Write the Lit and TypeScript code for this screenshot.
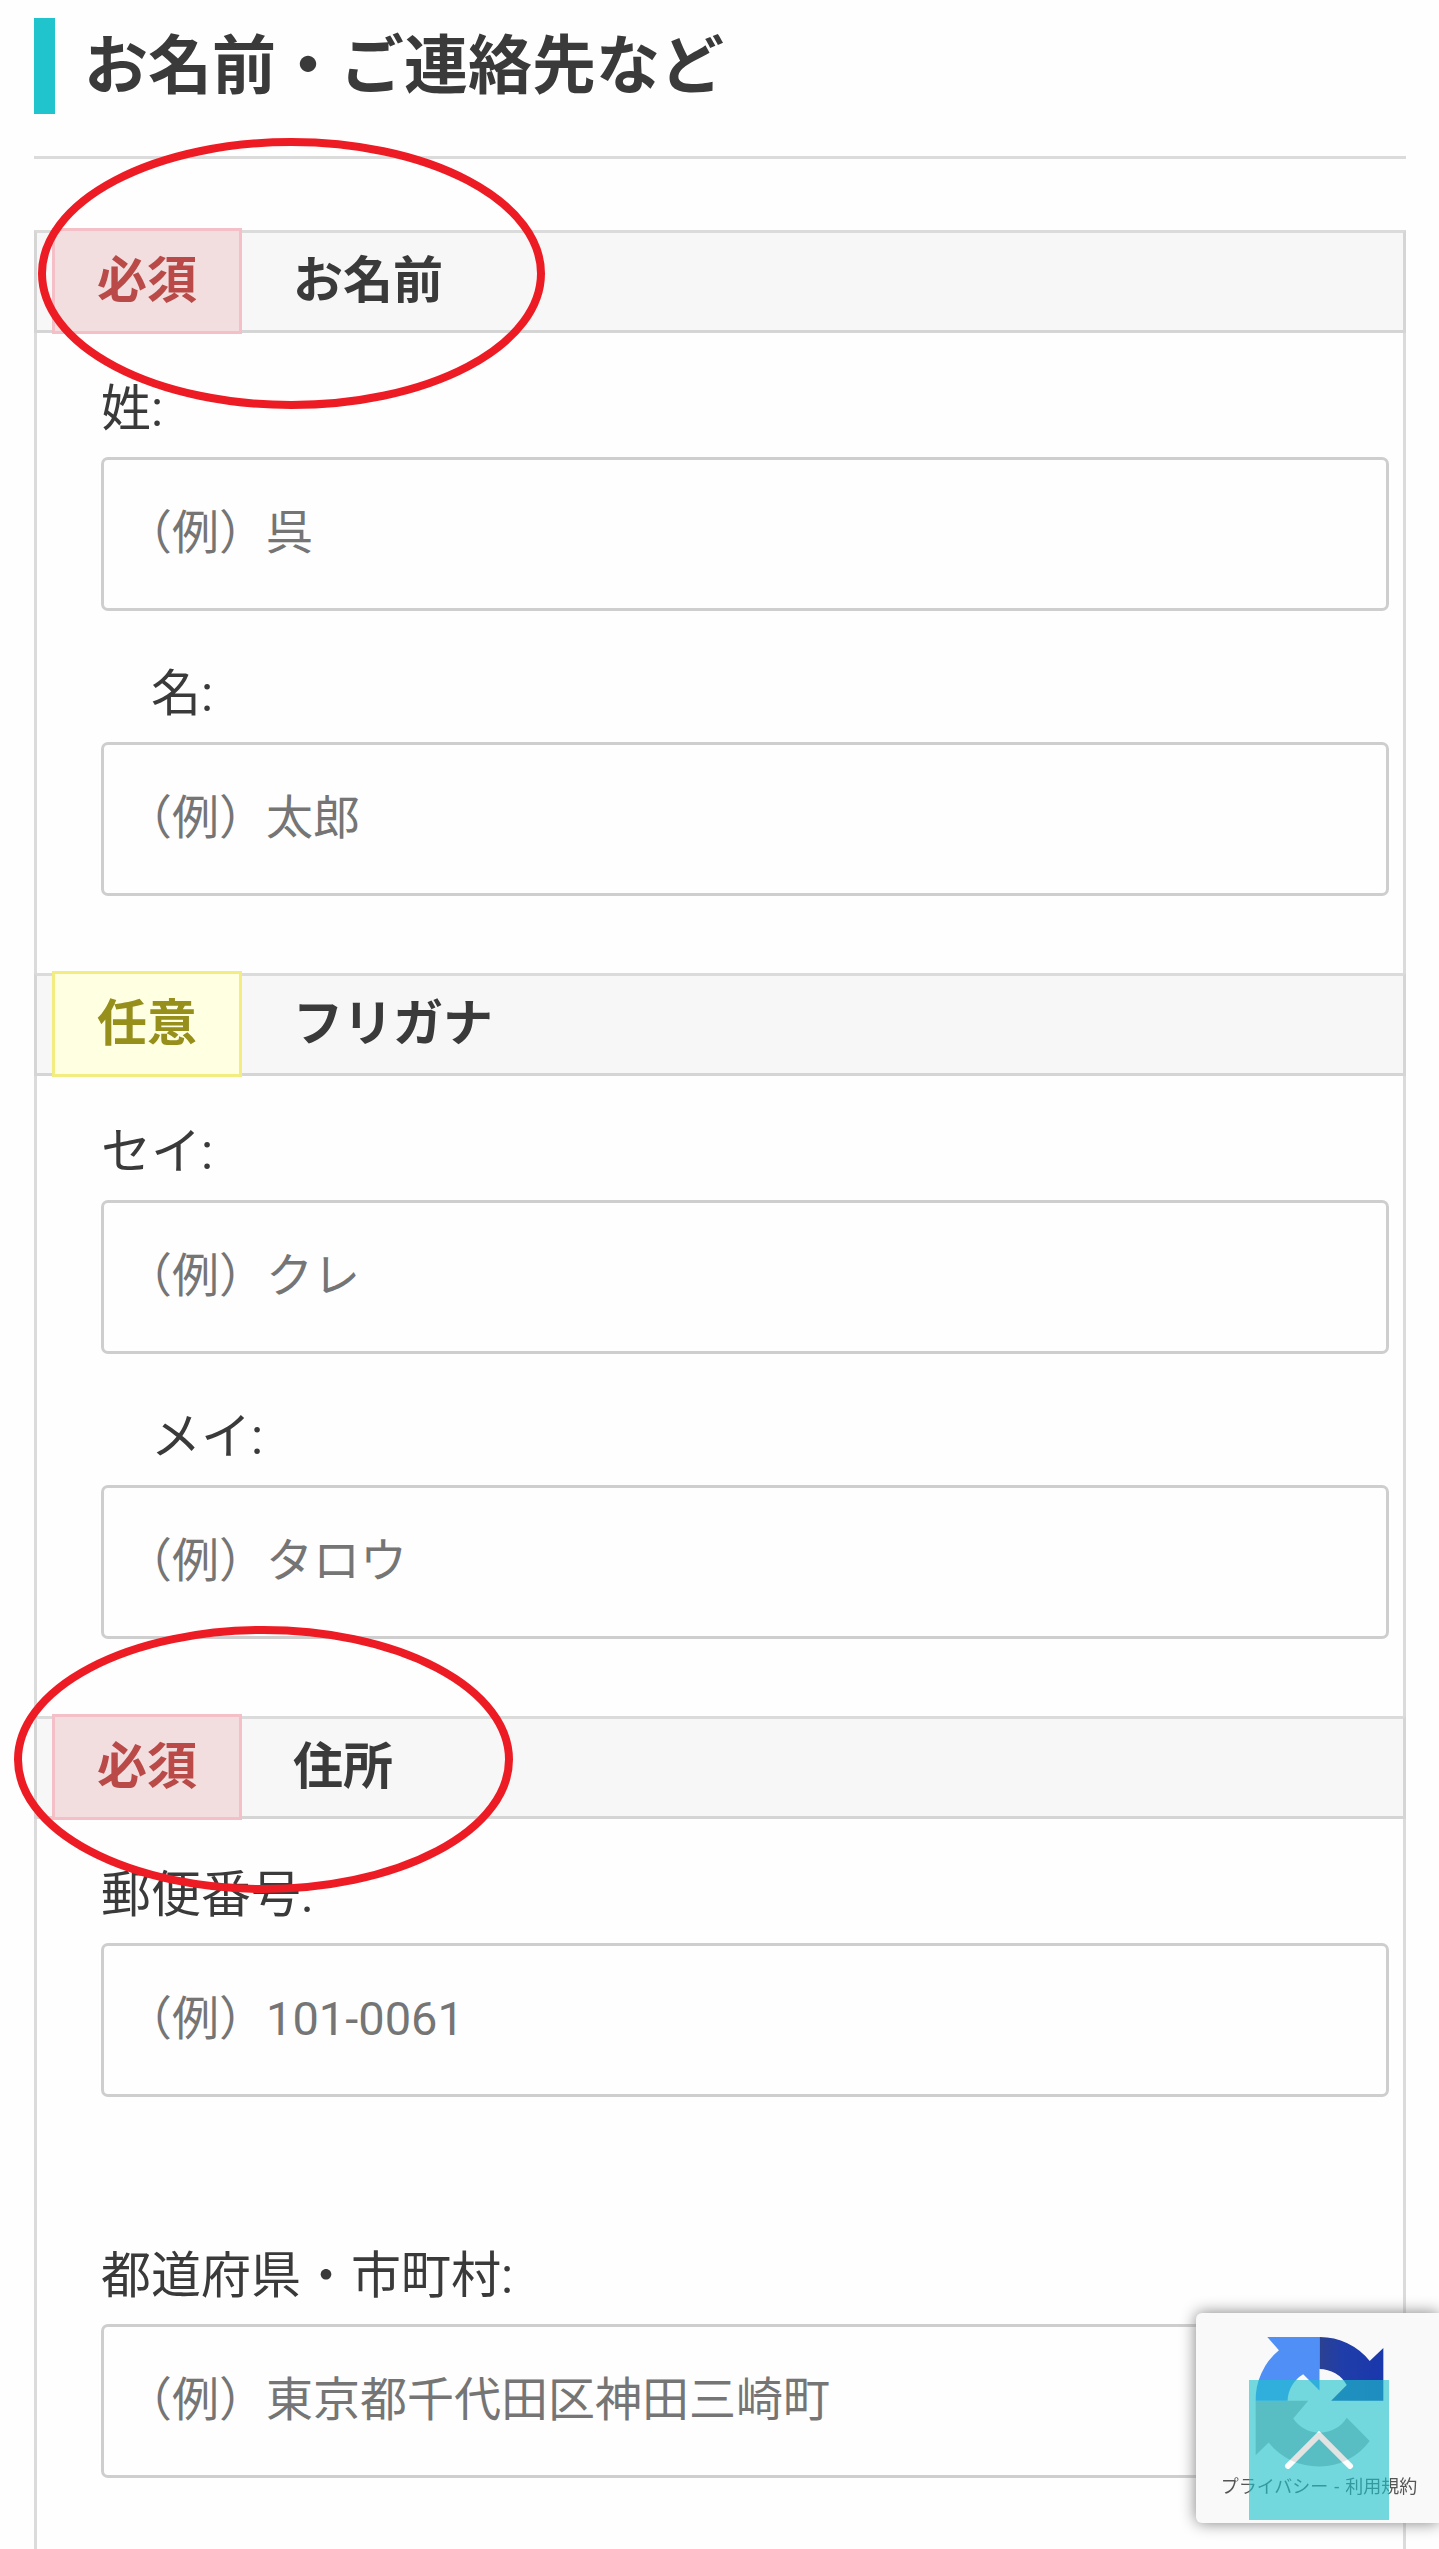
import { LitElement, html, css, nothing } from "lit";
import { customElement, property } from "lit/decorators.js";

interface Field {
  id: string;
  label: string;
  placeholder: string;
  layout?: "indented" | "spaced";
}

interface Group {
  title: string;
  required: boolean;
  mark?: "name" | "address";
  fields: Field[];
}

const GROUPS: Group[] = [
  {
    title: "お名前",
    required: true,
    mark: "name",
    fields: [
      { id: "family-name", label: "姓:", placeholder: "（例）呉" },
      { id: "given-name", label: "名:", placeholder: "（例）太郎", layout: "indented" },
    ],
  },
  {
    title: "フリガナ",
    required: false,
    fields: [
      { id: "family-kana", label: "セイ:", placeholder: "（例）クレ" },
      { id: "given-kana", label: "メイ:", placeholder: "（例）タロウ", layout: "indented" },
    ],
  },
  {
    title: "住所",
    required: true,
    mark: "address",
    fields: [
      { id: "postal-code", label: "郵便番号:", placeholder: "（例）101-0061" },
      {
        id: "city",
        label: "都道府県・市町村:",
        placeholder: "（例）東京都千代田区神田三崎町",
        layout: "spaced",
      },
    ],
  },
];

@customElement("form-group")
class FormGroup extends LitElement {
  @property({ attribute: false }) group!: Group;

  static styles = css`
    :host {
      display: block;
      position: relative;
    }
    .band {
      display: flex;
      align-items: stretch;
      gap: 51px;
      box-sizing: border-box;
      height: 103px;
      padding-left: 15px;
      border: 3px solid #d5d5d5;
      border-top-color: #dbdbdb;
      background: #f7f7f7;
    }
    .badge,
    .title {
      margin: 0;
      font-size: 50px;
      font-weight: 700;
      line-height: 96px;
    }
    .badge {
      margin: -5px 0 -4px;
      padding: 2px 42px 0;
      border: 3px solid #f5bfc8;
      background: #f2dede;
      color: #b94a48;
    }
    .optional {
      border-color: #f3ec80;
      background: #ffffe2;
      color: #968f1c;
    }
    .fields {
      display: flex;
      flex-direction: column;
      gap: 46px;
      padding: 39px 14px 77px 64px;
      border: solid #dbdbdb;
      border-width: 0 3px;
    }
    :host(:last-of-type) .fields {
      padding-bottom: 71px;
    }
    .field {
      display: flex;
      flex-direction: column;
      gap: 10px;
    }
    .spaced {
      margin-top: 96px;
    }
    .label {
      font-size: 50px;
      line-height: 75px;
    }
    .indented .label {
      padding-left: 50px;
    }
    .input {
      box-sizing: border-box;
      width: 100%;
      height: 154px;
      margin: 0;
      padding: 0 21px 4px;
      border: 3px solid #cecece;
      border-radius: 7px;
      background: #fefefe;
      color: #3a3a3a;
      font: inherit;
      font-size: 47px;
    }
    .input::placeholder {
      color: #757575;
      opacity: 1;
    }
    .mark {
      position: absolute;
      overflow: visible;
      fill: none;
      stroke: #ed1c24;
      stroke-width: 8;
      pointer-events: none;
      z-index: 1;
    }
    .name {
      left: 4px;
      top: -92px;
    }
    .address {
      left: -20px;
      top: -90px;
    }
  `;

  private renderMark(mark: Group["mark"]) {
    if (!mark) return nothing;
    const [w, h] = mark === "name" ? [507, 271] : [499, 267];
    return html`<svg class="mark ${mark}" width=${w} height=${h} aria-hidden="true">
      <ellipse cx=${w / 2} cy=${h / 2} rx=${w / 2 - 4} ry=${h / 2 - 4}></ellipse>
    </svg>`;
  }

  render() {
    const { title, required, mark, fields } = this.group;
    return html`
      <div class="band">
        <span class="badge ${required ? "" : "optional"}">${required ? "必須" : "任意"}</span>
        <h3 class="title">${title}</h3>
      </div>
      <div class="fields">
        ${fields.map(
          (f) => html`<div class="field ${f.layout ?? ""}">
            <label class="label" for=${f.id}>${f.label}</label>
            <input class="input" id=${f.id} type="text" placeholder=${f.placeholder} />
          </div>`
        )}
      </div>
      ${this.renderMark(mark)}
    `;
  }
}

@customElement("recaptcha-badge")
class RecaptchaBadge extends LitElement {
  static styles = css`
    :host {
      position: fixed;
      right: 0;
      bottom: 26px;
      z-index: 2;
      display: flex;
      flex-direction: column;
      align-items: center;
      box-sizing: border-box;
      width: 243px;
      height: 210px;
      padding: 24px 0 0 3px;
      border-radius: 6px 0 0 6px;
      background: #f9f9f9;
      box-shadow: 0 0 16px #808080;
    }
    .logo {
      width: 129px;
      height: 130px;
      overflow: visible;
    }
    .links {
      display: flex;
      gap: 6px;
      margin-top: 7px;
      color: #555;
      font-size: 18px;
      line-height: 26px;
      white-space: nowrap;
    }
    .link {
      color: inherit;
      text-decoration: none;
    }
  `;

  render() {
    return html`
      <svg class="logo" viewBox="285 171 384 391" aria-hidden="true">
        <defs>
          <linearGradient id="dark" x1="0" x2="1" y1="0" y2="0">
            <stop offset="0" stop-color="#2b4191"></stop>
            <stop offset="0.35" stop-color="#203ea9"></stop>
            <stop offset="1" stop-color="#1a37ac"></stop>
          </linearGradient>
        </defs>
        <path
          fill="#b5b5b5"
          d="M285 363H443L398 416A96 96 0 0 0 559 414L628 484A192 192 0 0 1 324 488L285 527Z"
        ></path>
        <path
          fill="#4f8ff6"
          d="M320 171H477V332L428 283A96 96 0 0 0 381 363H285A192 192 0 0 1 355 211Z"
        ></path>
        <path
          fill="url(#dark)"
          d="M477 171A192 192 0 0 1 628 243L669 204V363H512L559 315A96 96 0 0 0 477 267Z"
        ></path>
      </svg>
      <div class="links">
        <a class="link" href="#privacy">プライバシー</a><span>-</span
        ><a class="link" href="#terms">利用規約</a>
      </div>
    `;
  }
}

@customElement("app-root")
class AppRoot extends LitElement {
  static styles = css`
    :host {
      display: block;
      box-sizing: border-box;
      min-height: 100vh;
      padding: 18px 33px 0 34px;
      background: #fefefe;
      color: #3a3a3a;
      font-family: Roboto, "Noto Sans CJK JP", sans-serif;
    }
    .heading {
      margin: 0;
      padding: 2px 0 0 29px;
      border-left: 21px solid #20c4cc;
      font-size: 64px;
      font-weight: 700;
      line-height: 94px;
    }
    .rule {
      height: 3px;
      margin: 42px 0 71px;
      border: 0;
      background: #dbdbdb;
    }
    .top {
      position: fixed;
      right: 50px;
      bottom: 29px;
      z-index: 3;
      display: grid;
      place-items: center;
      width: 140px;
      height: 140px;
      padding: 0;
      border: 0;
      background: #20c4cc;
      opacity: 0.62;
    }
    .chevron {
      fill: none;
      stroke: #fff;
      stroke-width: 6;
      stroke-linecap: round;
      stroke-linejoin: miter;
    }
  `;

  private scrollUp() {
    window.scrollTo({ top: 0 });
  }

  render() {
    return html`
      <h2 class="heading">お名前・ご連絡先など</h2>
      <hr class="rule" />
      <form>${GROUPS.map((g) => html`<form-group .group=${g}></form-group>`)}</form>
      <recaptcha-badge></recaptcha-badge>
      <button class="top" type="button" aria-label="ページの先頭へ" @click=${this.scrollUp}>
        <svg class="chevron" width="70" height="38" aria-hidden="true">
          <path d="M4 35L35 4L66 35"></path>
        </svg>
      </button>
    `;
  }
}
